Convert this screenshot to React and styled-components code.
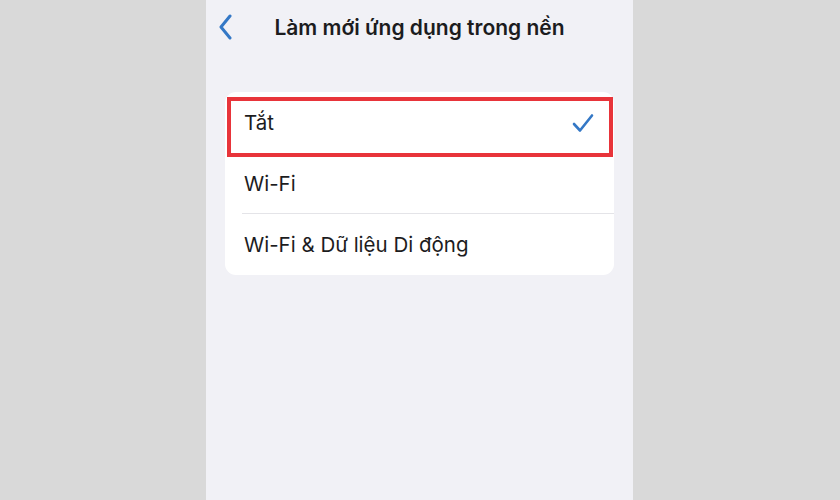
import React from "react";
import styled, { createGlobalStyle } from "styled-components";

const Global = createGlobalStyle`
  html, body { margin: 0; padding: 0; }
  body {
    background: #d9d9d9;
    font-family: Inter, "Noto Sans", sans-serif;
    -webkit-font-smoothing: antialiased;
  }
`;

const Stage = styled.div`
  width: 840px;
  height: 500px;
  display: flex;
  justify-content: center;
  background: #d9d9d9;
  overflow: hidden;
`;

const Phone = styled.div`
  width: 427px;
  margin-left: -1px;
  height: 500px;
  background: #f1f1f6;
  display: flex;
  flex-direction: column;
`;

const Header = styled.div`
  height: 54px;
  display: grid;
  grid-template-columns: 1fr auto 1fr;
  align-items: center;
  padding: 0 12px;
`;

const Back = styled.div`
  display: flex;
  align-items: center;
  color: #3478c6;
`;

const Title = styled.div`
  font-size: 21px;
  font-weight: 600;
  color: #1c1c1e;
  letter-spacing: 0;
  padding-top: 1px;
`;

const Card = styled.div`
  margin: 38px 19px 0;
  background: #fff;
  border-radius: 11px;
  display: flex;
  flex-direction: column;
`;

const Row = styled.div`
  position: relative;
  height: 61px;
  display: flex;
  align-items: center;
  justify-content: space-between;
  padding: 0 20px 0 19px;
  font-size: 20.5px;
  color: #1c1c1e;
  letter-spacing: 0;
  &::after {
    content: "";
    display: ${(p) => (p.$divider ? "block" : "none")};
    position: absolute;
    left: 17px;
    right: 0;
    bottom: 0;
    height: 1px;
    background: #e4e4e8;
  }
`;

const Highlight = styled.div`
  position: absolute;
  left: 2px;
  right: 1px;
  top: 5px;
  height: 60px;
  border: 4px solid #e8343a;
  box-sizing: border-box;
  pointer-events: none;
`;

const Check = () => (
  <svg width="22" height="20" viewBox="0 0 22 20" fill="none">
    <path d="M2 11 L8 17.5 L20 2.5" stroke="#3478c6" strokeWidth="2.6" strokeLinecap="round" strokeLinejoin="round" />
  </svg>
);

const Chevron = () => (
  <svg width="16" height="26" viewBox="0 0 16 26" fill="none">
    <path d="M12 2 L3 13 L12 24" stroke="#3478c6" strokeWidth="3" strokeLinecap="round" strokeLinejoin="round" />
  </svg>
);

export default function App() {
  return (
    <>
      <Global />
      <Stage>
        <Phone>
          <Header>
            <Back>
              <Chevron />
            </Back>
            <Title>Làm mới ứng dụng trong nền</Title>
            <div />
          </Header>
          <Card>
            <Row>
              <span>Tắt</span>
              <Check />
              <Highlight />
            </Row>
            <Row $divider>
              <span>Wi-Fi</span>
            </Row>
            <Row>
              <span>Wi-Fi &amp; Dữ liệu Di động</span>
            </Row>
          </Card>
        </Phone>
      </Stage>
    </>
  );
}
